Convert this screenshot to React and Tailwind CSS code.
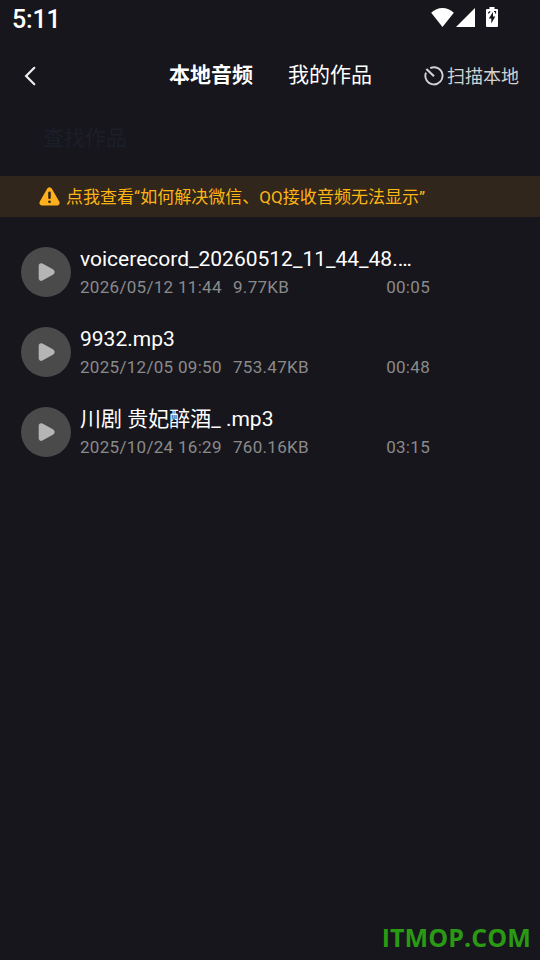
import { useState } from "react";

const tabs = ["本地音频", "我的作品"];

const files = [
  { name: "voicerecord_20260512_11_44_48.…", date: "2026/05/12 11:44", size: "9.77KB", length: "00:05" },
  { name: "9932.mp3", date: "2025/12/05 09:50", size: "753.47KB", length: "00:48" },
  { name: "川剧 贵妃醉酒_ .mp3", date: "2025/10/24 16:29", size: "760.16KB", length: "03:15" },
];

function StatusBar() {
  return (
    <div className="flex h-10 items-start justify-between pl-3 pr-[42px] text-white">
      <span className="pt-[5px] text-[25px] leading-[30px] font-medium tracking-[-0.2px]">5:11</span>
      <div className="flex items-start pt-[7px]">
        <svg width="24" height="20" viewBox="0 0 24 20" fill="currentColor">
          <path d="M0.200 5.800C6.500 -0.600 16.500 -0.600 22.800 5.800L11.500 20Z" />
        </svg>
        <svg width="20" height="20" viewBox="0 0 20 20" fill="currentColor">
          <path d="M20 1V20H1Z" />
        </svg>
        <svg width="12" height="20" viewBox="0 0 12 20" fill="currentColor" className="ml-[11px]">
          <path d="M3.500 0h5v2H11q1 0 1 1v16q0 1-1 1H1q-1 0-1-1V3q0-1 1-1h2.500z" />
          <path d="M7 5 2.800 11.500H5.300V16.500L9.300 9.500H7Z" fill="#17161c" />
          <path d="M2.200 6.200 4.200 4.500M8 4.500h1.500v2" stroke="#17161c" strokeWidth="1.200" fill="none" />
        </svg>
      </div>
    </div>
  );
}

function PlayButton() {
  return (
    <button className="flex size-[50px] shrink-0 items-center justify-center rounded-full bg-[#4a4a4a]">
      <svg width="18" height="20" viewBox="0 0 18 20" className="ml-0.5">
        <path
          d="M3.200 3.700 13.700 9.400Q14.500 10 13.700 10.600L3.200 16.300Z"
          fill="#b5b5b5"
          stroke="#b5b5b5"
          strokeWidth="5"
          strokeLinejoin="round"
        />
      </svg>
    </button>
  );
}

export default function App() {
  const [active, setActive] = useState(0);

  return (
    <div className="flex h-[960px] w-[540px] flex-col overflow-hidden bg-[#17161c] font-[Roboto,'Noto_Sans_CJK_SC',sans-serif]">
      <StatusBar />

      {/* Header */}
      <header className="flex h-[70px] items-center">
        <button className="ml-6 w-[145px] pt-0.5">
          <svg width="12" height="20" viewBox="0 0 12 20" fill="none" stroke="#eee" strokeWidth="2.200" strokeLinecap="round">
            <path d="M10.300 1.800 2.100 10l8.200 8.200" />
          </svg>
        </button>
        <nav className="flex gap-[35px] text-[21px] leading-[30px] text-white">
          {tabs.map((tab, i) => (
            <button key={tab} className={i === active ? "font-bold" : "font-normal"} onClick={() => setActive(i)}>
              {tab}
            </button>
          ))}
        </nav>
        <button className="ml-auto flex items-center gap-[3px] pt-[3px] pr-[21px] text-[18px] leading-[26px] text-[#d2d2d2]">
          <svg width="20" height="20" viewBox="0 0 20 20" fill="none" stroke="currentColor" strokeWidth="1.900" className="mb-0.5">
            <path d="M6.200 2.100A8.600 8.600 0 1 1 2 6.600" />
            <path d="M2.400 3 10 10.300" strokeWidth="2.200" />
          </svg>
          扫描本地
        </button>
      </header>

      <div className="flex h-[66px] items-center pl-[43px] pb-[10px]">
        <span className="text-[21px] leading-[30px] text-[#1b1f2a]">查找作品</span>
      </div>

      {/* Help banner */}
      <div className="flex h-[41px] items-center bg-[#30261b] pl-[39px] text-[17px] text-[#fdb515]">
        <svg width="21" height="19" viewBox="0 0 21 19" fill="#ffb01c" className="mr-[6px]">
          <path d="M10.500 3.200 17.800 15.800H3.200Z" stroke="#ffb01c" strokeWidth="5.500" strokeLinejoin="round" />
          <path d="M10.500 5.800v5" stroke="#30261b" strokeWidth="2.600" strokeLinecap="round" />
          <circle cx="10.500" cy="14.800" r="1.400" fill="#30261b" />
        </svg>
        <span className="pt-0.5 tracking-[0.030px]">点我查看“如何解决微信、QQ接收音频无法显示”</span>
      </div>

      {/* Audio files */}
      <ul className="pt-[15px]">
        {files.map((file) => (
          <li key={file.name} className="flex h-20 items-center gap-[9px] pl-[21px]">
            <PlayButton />
            <div className="w-[350px]">
              <p className="text-[21px] leading-[30px] whitespace-nowrap text-white">{file.name}</p>
              <p className="flex h-[26px] items-center pt-0.5 text-[17px] tracking-[0.300px] text-[#8a8a8b]">
                <span className="w-[153px]">{file.date}</span>
                <span>{file.size}</span>
                <span className="ml-auto">{file.length}</span>
              </p>
            </div>
          </li>
        ))}
      </ul>

      <div className="mt-auto pr-[9px] pb-[5px] text-right font-['Open_Sans',sans-serif] text-[25px] leading-9 font-bold tracking-[0.100px] text-[#2a9914]">
        ITMOP.COM
      </div>
    </div>
  );
}
